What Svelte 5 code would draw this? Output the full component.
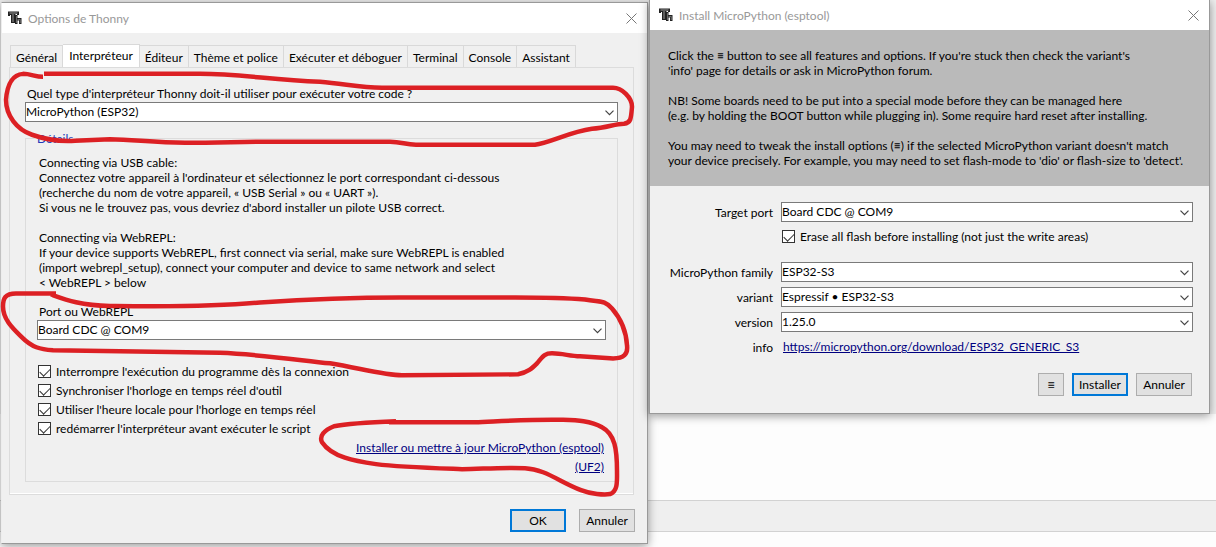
<script>
  const tabs = [
    'Général',
    'Interpréteur',
    'Éditeur',
    'Thème et police',
    'Exécuter et déboguer',
    'Terminal',
    'Console',
    'Assistant'
  ];
  let active = $state('Interpréteur');

  let options = $state([
    { label: "Interrompre l'exécution du programme dès la connexion", on: true },
    { label: "Synchroniser l'horloge en temps réel d'outil", on: true },
    { label: "Utiliser l'heure locale pour l'horloge en temps réel", on: true },
    { label: "redémarrer l'interpréteur avant exécuter le script", on: true }
  ]);
  let erase = $state(true);

  const help = `Connecting via USB cable:
Connectez votre appareil à l'ordinateur et sélectionnez le port correspondant ci-dessous
(recherche du nom de votre appareil, « USB Serial » ou « UART »).
Si vous ne le trouvez pas, vous devriez d'abord installer un pilote USB correct.

Connecting via WebREPL:
If your device supports WebREPL, first connect via serial, make sure WebREPL is enabled
(import webrepl_setup), connect your computer and device to same network and select
< WebREPL > below`;

  const notice = `Click the ≡ button to see all features and options. If you're stuck then check the variant's
'info' page for details or ask in MicroPython forum.

NB! Some boards need to be put into a special mode before they can be managed here
(e.g. by holding the BOOT button while plugging in). Some require hard reset after installing.

You may need to tweak the install options (≡) if the selected MicroPython variant doesn't match
your device precisely. For example, you may need to set flash-mode to 'dio' or flash-size to 'detect'.`;
</script>

{#snippet logo()}
  <svg class="logo" viewBox="0 0 14 14" aria-hidden="true">
    <path d="M0 0.5H11V4H9V3H7.5V12H3V4H2V5H0Z" fill="#222" />
    <path d="M1.5 2H9.500M5 3V11" stroke="#999" fill="none" />
    <path d="M7 4H9.500V7H13.500V13H11V9.500H9.500V13H7Z" fill="#222" />
    <path d="M8.500 5V12M9.500 8.500H12.300V12" stroke="#888" stroke-width="0.7" fill="none" />
  </svg>
{/snippet}

{#snippet titlebar(text)}
  <header class="titlebar">
    {@render logo()}
    <h1>{text}</h1>
    <button class="close" aria-label="Fermer">
      <svg viewBox="0 0 11 11" aria-hidden="true">
        <path d="M0.500 0.500L10.500 10.500M10.500 0.500L0.500 10.500" stroke="#777" fill="none" />
      </svg>
    </button>
  </header>
{/snippet}

{#snippet combo(id, value)}
  <div class="combo">
    <select {id}><option>{value}</option></select>
    <svg viewBox="0 0 9 6" aria-hidden="true">
      <path d="M0.500 0.700L4.500 4.700L8.500 0.700" stroke="#444" stroke-width="1.2" fill="none" />
    </svg>
  </div>
{/snippet}

<div class="desktop">
  <div class="strip"></div>

  <section class="window options">
    {@render titlebar('Options de Thonny')}
    <div class="content">
      <div class="tabs" role="tablist">
        {#each tabs as tab}
          <button role="tab" aria-selected={tab === active} onclick={() => (active = tab)}>{tab}</button>
        {/each}
      </div>
      <div class="pane">
        <label class="lead" for="kind">Quel type d'interpréteur Thonny doit-il utiliser pour exécuter votre code ?</label>
        {@render combo('kind', 'MicroPython (ESP32)')}
        <fieldset>
          <legend>Détails</legend>
          <p class="text">{help}</p>
          <label class="lead port" for="port">Port ou WebREPL</label>
          {@render combo('port', 'Board CDC @ COM9')}
          <div class="checks">
            {#each options as option}
              <label class="check"><input type="checkbox" bind:checked={option.on} />{option.label}</label>
            {/each}
          </div>
          <div class="links">
            <a href="#esptool">Installer ou mettre à jour MicroPython (esptool)</a>
            <a href="#uf2">(UF2)</a>
          </div>
        </fieldset>
      </div>
      <div class="buttons">
        <button class="btn primary">OK</button>
        <button class="btn">Annuler</button>
      </div>
    </div>
    <svg class="marks" viewBox="0 0 645 541" preserveAspectRatio="none" aria-hidden="true">
      <path d="M43 77C35 77 31 74 23 74C11 75 7 87 6 100C6 116 17 130 32 135C46 140 58 142 75 141L110 139.500C135 140 155 143 185 143C220 143 240 142 270 142H390C402 142 405 145 416 145H535C550 143 570 132 592 129C607 128 615 124 624 124C631 123 631 119 632 107C632 98 622 88 613 88H382C360 88 345 84 320 82C270 80 240 74 200 74H44" />
      <path d="M56 294H16C5 294 3 299 3 307C3 320 13 329 22 338C32 348 40 350 53 351L220 353.500C260 355 300 361 330 364C360 369 385 376 402 376L518 375C528 373 532 369 537 364C543 357 544 354 552 354C563 354 570 357 580 357L610 359C625 360 628 354 627 346C626 329 619 317 612 309C604 300 600 303 585 300C560 298 540 298 515 298H400C340 298 290 301 260 303C210 308 150 307 110 306.500C80 306 65 300 51 295" />
      <path d="M396 422C370 423 349 424 334 427C324 431 319 437 322 443C332 458 355 462 376 465C400 468 435 469 462 470C480 470 500 468 525 469C545 470 560 483 581 491C591 495 604 496 610 495C618 492 617 482 617 472C617 450 615 435 602 428C590 421 575 421 560 420.500C530 420 500 422 475 423H389" />
    </svg>
  </section>

  <section class="window install">
    {@render titlebar('Install MicroPython (esptool)')}
    <p class="text notice">{notice}</p>
    <div class="form">
      <label for="target">Target port</label>
      {@render combo('target', 'Board CDC @ COM9')}
      <label class="check erase"><input type="checkbox" bind:checked={erase} />Erase all flash before installing (not just the write areas)</label>
      <label for="family">MicroPython family</label>
      {@render combo('family', 'ESP32-S3')}
      <label for="variant">variant</label>
      {@render combo('variant', 'Espressif • ESP32-S3')}
      <label for="version">version</label>
      {@render combo('version', '1.25.0')}
      <span>info</span>
      <a href="https://micropython.org/download/ESP32_GENERIC_S3">https://micropython.org/download/ESP32_GENERIC_S3</a>
    </div>
    <div class="buttons">
      <button class="btn menu" aria-label="Menu">≡</button>
      <button class="btn primary">Installer</button>
      <button class="btn">Annuler</button>
    </div>
  </section>
</div>

<style>
  :global(body) {
    margin: 0;
  }
  .desktop,
  .desktop * {
    box-sizing: border-box;
  }
  .desktop {
    position: relative;
    display: grid;
    grid-template-columns: 647fr 561fr;
    column-gap: 1px;
    align-items: start;
    min-height: 100vh;
    padding: 0 6px 0 1px;
    overflow: hidden;
    background: linear-gradient(#eee 414px, #fdfdfd 414px);
    color: #000;
    font: 12px/15px Lato, 'Open Sans', sans-serif;
  }
  .strip {
    position: absolute;
    top: 500px;
    left: 0;
    right: 0;
    height: 32px;
    border: solid #d2d2d2;
    border-width: 1px 0;
    background: #efefef;
  }
  button,
  select,
  input {
    margin: 0;
    font: inherit;
    color: inherit;
  }
  .window {
    position: relative;
    background: #f0f0f0;
    border: 1px solid #999;
    box-shadow: 0 2px 9px rgb(0 0 0 / 40%);
  }
  .options {
    margin-top: 2px;
    border-left-color: #ededed;
  }
  .install {
    border-top: 0;
  }
  .titlebar {
    display: flex;
    align-items: center;
    height: 30px;
    padding: 0 10px 0 6px;
    background: #fff;
  }
  .install .titlebar {
    padding-left: 9px;
  }
  .logo {
    width: 14px;
    height: 14px;
    margin-right: 6px;
  }
  h1 {
    flex: 1;
    margin: 0;
    font-size: 12px;
    font-weight: 400;
    color: #999;
  }
  .close {
    display: flex;
    padding: 0;
    border: 0;
    background: none;
  }
  .close svg {
    width: 11px;
    height: 11px;
  }
  .content {
    padding: 11px 12px 11px 7px;
  }
  .tabs {
    display: flex;
    align-items: flex-end;
    padding-left: 1px;
  }
  .tabs button {
    height: 22px;
    padding: 2px 5px 0;
    border: 1px solid #d9d9d9;
    border-width: 1px 1px 0 0;
    background: #f0f0f0;
    white-space: nowrap;
  }
  .tabs button:first-child {
    border-left-width: 1px;
  }
  .tabs button[aria-selected='true'] {
    height: 23px;
    padding: 0 6px 1px;
    background: #fff;
  }
  .pane {
    margin-right: 1px;
    padding: 18px 15px 12px;
    border: 1px solid #dcdcdc;
    box-shadow: inset 0 -1px #fff;
  }
  .lead {
    display: block;
    padding: 0 0 1px 2px;
  }
  .combo {
    position: relative;
  }
  .combo select {
    display: block;
    width: 100%;
    height: 20px;
    padding: 0 20px 1px 0;
    border: 1px solid #7a7a7a;
    border-radius: 0;
    background: #fff;
    appearance: none;
  }
  .combo svg {
    position: absolute;
    right: 4px;
    top: 8px;
    width: 9px;
    height: 6px;
    pointer-events: none;
  }
  fieldset {
    min-width: 0;
    margin: 9px 0 0;
    padding: 9px 11px 5px;
    border: 1px solid #dcdcdc;
  }
  legend {
    margin-left: -2px;
    padding: 0 2px;
    color: #2038b8;
  }
  .text {
    margin: 0;
    white-space: pre-wrap;
  }
  fieldset .text {
    padding-left: 2px;
  }
  .port {
    margin-top: 14px;
  }
  .checks {
    margin-top: 22px;
  }
  .check {
    display: flex;
    align-items: center;
    gap: 5px;
    height: 19px;
    padding-left: 1px;
  }
  .check input {
    width: 13px;
    height: 13px;
    border: 1px solid #333;
    background: #fff;
    appearance: none;
  }
  .check input:checked::before {
    content: '';
    display: block;
    width: 9px;
    height: 5px;
    margin: 2px 0 0 1px;
    border: solid #333;
    border-width: 0 0 1px 1px;
    transform: rotate(-45deg);
  }
  .links {
    display: flex;
    flex-direction: column;
    align-items: flex-end;
    padding-right: 2px;
    line-height: 19px;
  }
  a {
    color: #000080;
    text-decoration: underline;
  }
  .buttons {
    display: flex;
    justify-content: flex-end;
  }
  .options .buttons {
    gap: 13px;
    margin-top: 14px;
  }
  .btn {
    width: 56px;
    height: 23px;
    padding: 0;
    border: 1px solid #adadad;
    background: #e1e1e1;
  }
  .primary {
    border: 2px solid #0078d7;
  }
  .menu {
    width: 26px;
    font-family: 'Open Sans', sans-serif;
  }
  .marks {
    position: absolute;
    left: -2px;
    top: -3px;
    width: 100%;
    height: 100%;
    overflow: visible;
    pointer-events: none;
  }
  .marks path {
    fill: none;
    stroke: #dc2024;
    stroke-width: 4.5;
    stroke-linejoin: round;
  }
  .notice {
    padding: 18px 12px 18px 18px;
    background: #bababa;
  }
  .form {
    display: grid;
    grid-template-columns: minmax(105px, auto) 1fr;
    gap: 5px 8px;
    align-items: center;
    padding: 16px 16px 0 18px;
  }
  .form > label,
  .form > span {
    text-align: right;
  }
  .form > .erase {
    grid-column: 2;
    margin: 0 0 11px;
    text-align: left;
  }
  .form a {
    padding: 2px 0 3px 2px;
  }
  .install .buttons {
    gap: 8px;
    padding: 16px 17px 17px;
  }
</style>
